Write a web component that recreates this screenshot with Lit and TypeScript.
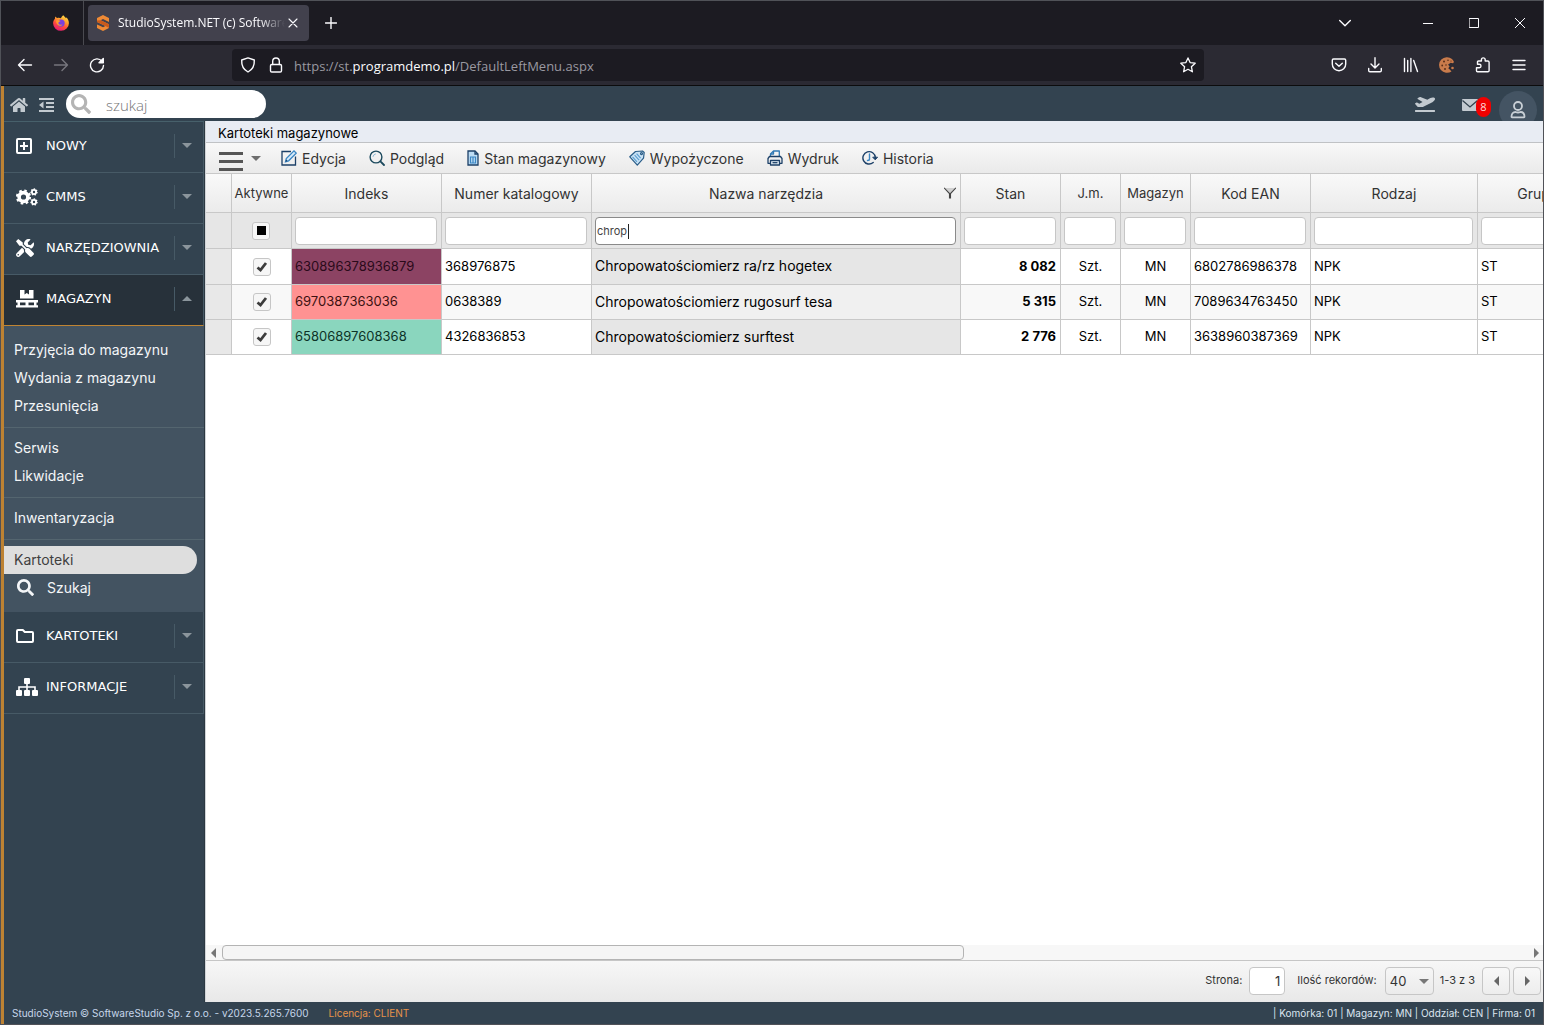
import { LitElement, html, css, svg, nothing } from "lit";
import { customElement, property } from "lit/decorators.js";
import { classMap } from "lit/directives/class-map.js";

/* ---------- icons ---------- */

const fa = (w: number, h: number, vw: number, vh: number, d: string) =>
  html`<svg width=${w} height=${h} viewBox="0 0 ${vw} ${vh}" fill="currentColor" aria-hidden="true"><path d=${d} /></svg>`;

const line = (s: number, body: unknown, w = 1.4, view = 16) =>
  html`<svg width=${s} height=${s} viewBox="0 0 ${view} ${view}" fill="none" stroke="currentColor"
    stroke-width=${w} stroke-linecap="round" stroke-linejoin="round" aria-hidden="true">${body}</svg>`;

const SEARCH =
  "M505 442.7L405.3 343c-4.5-4.5-10.6-7-17-7H372c27.6-35.3 44-79.7 44-128C416 93.1 322.9 0 208 0S0 93.1 0 208s93.1 208 208 208c48.3 0 92.7-16.4 128-44v16.3c0 6.4 2.5 12.5 7 17l99.7 99.7c9.4 9.4 24.6 9.4 33.9 0l28.3-28.3c9.4-9.4 9.4-24.6.1-34zM208 336c-70.7 0-128-57.2-128-128 0-70.7 57.2-128 128-128 70.7 0 128 57.2 128 128 0 70.7-57.2 128-128 128z";
const HOME =
  "M280.37 148.26L96 300.11V464a16 16 0 0 0 16 16l112.06-.29a16 16 0 0 0 15.92-16V368a16 16 0 0 1 16-16h64a16 16 0 0 1 16 16v95.64a16 16 0 0 0 16 16.05L464 480a16 16 0 0 0 16-16V300L295.67 148.26a12.19 12.19 0 0 0-15.3 0zM571.6 251.47L488 182.56V44.05a12 12 0 0 0-12-12h-56a12 12 0 0 0-12 12v72.61L318.47 43a48 48 0 0 0-61 0L4.34 251.47a12 12 0 0 0-1.6 16.9l25.5 31A12 12 0 0 0 45.15 301l235.22-193.74a12.19 12.19 0 0 1 15.3 0L530.9 301a12 12 0 0 0 16.9-1.6l25.5-31a12 12 0 0 0-1.7-16.93z";
const TOOLS =
  "M501.1 395.7L384 278.6c-23.1-23.1-57.6-27.6-85.4-13.9L192 158.1V96L64 0 0 64l96 128h62.1l106.6 106.6c-13.6 27.8-9.2 62.3 13.9 85.4l117.1 117.1c14.6 14.6 38.2 14.6 52.7 0l52.7-52.7c14.5-14.6 14.5-38.2 0-52.7zM331.7 225c28.3 0 54.9 11 74.9 31l19.4 19.4c15.8-6.9 30.8-16.5 43.8-29.5 37.1-37.1 49.7-89.3 37.9-136.7-2.2-9-13.5-12.1-20.1-5.5l-74.4 74.4-67.9-11.3L334 98.9l74.4-74.4c6.6-6.6 3.4-17.9-5.7-20.2-47.4-11.7-99.6.9-136.6 37.9-28.5 28.5-41.9 66.1-41.2 103.6l82.1 82.1c8.1-1.9 16.5-2.9 24.7-2.9zm-103.9 82l-56.7-56.7L18.7 402.8c-25 25-25 65.5 0 90.5s65.5 25 90.5 0l123.6-123.6c-7.6-19.9-9.9-41.6-5-62.7zM64 472c-13.2 0-24-10.8-24-24 0-13.3 10.7-24 24-24s24 10.7 24 24c0 13.2-10.7 24-24 24z";
const PLANE =
  "M624 448H16c-8.84 0-16 7.16-16 16v32c0 8.84 7.16 16 16 16h608c8.84 0 16-7.16 16-16v-32c0-8.84-7.16-16-16-16zM80.55 341.27c6.28 6.84 15.1 10.72 24.33 10.71l130.54-.18a65.62 65.62 0 0 0 29.64-7.12l290.96-147.65c26.74-13.57 50.71-32.94 67.02-58.31 18.31-28.48 20.3-49.09 13.07-63.65-7.21-14.57-24.74-25.27-58.25-27.45-29.85-1.94-59.54 5.92-86.28 19.48l-98.51 49.99-218.7-82.06a17.799 17.799 0 0 0-18-1.11L90.62 67.29c-10.67 5.41-13.25 19.65-5.17 28.53l156.22 98.1-103.21 52.38-72.35-36.47a17.804 17.804 0 0 0-16.07.02L9.91 230.22c-10.44 5.3-13.19 19.12-5.57 28.08l76.21 82.97z";

const firefoxIcon = html`<svg width="16" height="16" viewBox="0 0 16 16" aria-hidden="true">
  <defs>
    <linearGradient id="ff" x1="0.8" y1="0" x2="0.3" y2="1">
      <stop offset="0" stop-color="#ffe14a" /><stop offset="0.35" stop-color="#ffa02c" />
      <stop offset="0.65" stop-color="#ff4a3d" /><stop offset="1" stop-color="#e4187a" />
    </linearGradient>
  </defs>
  <path fill="url(#ff)" d="M10.4 0.2c.9 1.3 1.9 2 2.6 3 .3-.2.4-.5.3-.9 1.700 1.300 2.600 3.800 2.600 5.900A7.900 7.600 0 0 1 .1 8.300C.1 6.300.8 4.800 1.900 3.700c0-.9.2-1.600.5-2.200.5.8 1.200 1.200 2 1.500C6.100 2.600 7 3 8 3.200c.4-1.300 1.400-2.400 2.400-3z" />
  <circle cx="8" cy="8.100" r="3.700" fill="#7a3fe0" />
  <path fill="#ff9a2e" d="M3 5.600c1.500-1 3.100-.6 4.600.4-.9.800-2 .9-2.200 1.800-.1 2 2.400 2.500 4.100 1.500-1 2.600-6.300 2.300-6.500-3.700z" />
</svg>`;

const studioIcon = html`<svg width="14" height="16" viewBox="0 0 14 16" aria-hidden="true">
  <path fill="#ef8a35" d="M7 0l6 3v4L9.500 5.200 7 4 4.600 5.200 13 9.300V13l-6 3-6-3V9.400l3.500 1.700L7 12.200l2.400-1.100L1 7V3z" />
  <path fill="#c95a1c" d="M4.600 5.200L13 9.300V13l-3.600-1.900L1 7V5.500z" />
</svg>`;

const gear = (cx: number, cy: number, r: number, hole: number, teeth: number) => {
  const c = 2 * Math.PI * r;
  const seg = c / teeth / 2;
  return svg`<circle cx=${cx} cy=${cy} r=${(r + hole) / 2} fill="none" stroke="currentColor" stroke-width=${r - hole} />
    <circle cx=${cx} cy=${cy} r=${r} fill="none" stroke="currentColor" stroke-width=${r * 0.45} stroke-dasharray="${seg} ${seg}" />`;
};

const menuIcons: Record<string, unknown> = {
  plus: html`<svg width="16" height="16" viewBox="0 0 16 16" fill="none" stroke="currentColor" stroke-width="2" aria-hidden="true">
    <rect x="1" y="1" width="14" height="14" rx="1" /><path d="M8 4v8M4 8h8" /></svg>`,
  cogs: html`<svg width="22" height="18" viewBox="0 0 22 18" aria-hidden="true">
    ${gear(7.5, 9, 6.200, 2.6, 8)}${gear(18, 4, 3, 1.200, 7)}${gear(18, 14, 3, 1.200, 7)}</svg>`,
  tools: fa(18, 18, 512, 512, TOOLS),
  pallet: html`<svg width="22" height="18" viewBox="0 0 22 18" fill="currentColor" aria-hidden="true">
    <path d="M4 0h4.500v4.500L10.800 3l2.200 1.500V0H17.500v8.500H4z" />
    <path d="M0 10h22v2.400h-1.500v2.800H22v2.300H0v-2.300h1.500v-2.800H0zM4 12.400v2.800h5.500v-2.800zM12.500 12.400v2.800H18v-2.800z" fill-rule="evenodd" /></svg>`,
  folder: html`<svg width="18" height="14" viewBox="0 0 18 14" fill="none" stroke="currentColor" stroke-width="2" stroke-linejoin="round" aria-hidden="true">
    <path d="M1 2c0-.6.4-1 1-1h4.800l2 2H16c.6 0 1 .4 1 1v8c0 .6-.4 1-1 1H2c-.6 0-1-.4-1-1z" /></svg>`,
  sitemap: html`<svg width="22" height="18" viewBox="0 0 22 18" fill="currentColor" aria-hidden="true">
    <rect x="8" y="0" width="6" height="6" rx="1" /><rect x="0" y="12" width="6" height="6" rx="1" />
    <rect x="8" y="12" width="6" height="6" rx="1" /><rect x="16" y="12" width="6" height="6" rx="1" />
    <path d="M10.200 6h1.600v6h-1.600z" /><path d="M3 12V9h16v3" fill="none" stroke="currentColor" stroke-width="1.600" /></svg>`,
};

const toolIcons: Record<string, unknown> = {
  edit: html`<svg width="16" height="16" viewBox="0 0 16 16" fill="none" stroke="#1c4068" stroke-width="1.300" aria-hidden="true">
    <path d="M10 1.500H1v13.500h13.500V6.500" /><path d="M4.500 11.700l.8-3.200L13 .9l2.200 2.200-7.600 7.700z" fill="#d8ebfa" stroke="#3a86c4" />
    <path d="M4.500 11.700l.6-2.200 1.600 1.600z" fill="#1c4068" stroke="none" /></svg>`,
  view: html`<svg width="16" height="16" viewBox="0 0 16 16" fill="none" stroke="#1c4a5e" stroke-width="1.400" stroke-linecap="round" aria-hidden="true">
    <circle cx="7" cy="7" r="5.900" /><path d="M11.400 11.400l3.600 3.600" stroke-width="1.800" /><path d="M4 6.500a3.200 3.200 0 0 1 2.500-2.600" stroke="#8fbcd8" stroke-width="1" /></svg>`,
  stock: html`<svg width="12" height="16" viewBox="0 0 12 16" fill="none" stroke="#1c4068" stroke-width="1.300" aria-hidden="true">
    <path d="M1 1h7l3 3v11H1z" fill="#bcdcf4" /><path d="M8 1v3h3" /><path d="M3 7h6M3 13h6M3.500 6.500v7M6 6.500v7M8.500 6.500v7" stroke="#3a86c4" stroke-width="1.200" /></svg>`,
  tag: html`<svg width="16" height="16" viewBox="0 0 16 16" fill="none" stroke="#2a5d88" stroke-width="1.200" stroke-linejoin="round" aria-hidden="true">
    <path d="M.8 6.800L6.500 1.500 13.500 1l1.700 1.500-.7 5.700L8.300 15.200z" fill="#c9e2f5" /><path d="M3.500 6.800l4.500 5M5.600 5.200l4.500 5M7.600 3.600l4 4.500" stroke="#5d9fd0" stroke-width="1.200" />
    <circle cx="12.500" cy="3.600" r="1" fill="#fff" /></svg>`,
  print: html`<svg width="16" height="16" viewBox="0 0 16 16" fill="none" stroke="#1c4068" stroke-width="1.300" stroke-linejoin="round" aria-hidden="true">
    <path d="M3.500 6.500V4l3-3h5.800v5.500" stroke="#2f78b4" /><path d="M6.500 1v3h-3" stroke="#2f78b4" /><path d="M3 13.300H1V8.500l1.500-2h11L15 8.500v4.800h-2" /><path d="M3.500 10.500h9V15h-9z" fill="#eaf4fb" /><path d="M5.500 12.700h5" /></svg>`,
  history: html`<svg width="16" height="16" viewBox="0 0 16 16" fill="none" stroke="#1c4068" stroke-width="1.400" stroke-linecap="round" aria-hidden="true">
    <path d="M11.200 12.500A6.200 6.200 0 1 1 13.300 7.500" /><path d="M11 7.500l2.200 2.300L15.300 7.500z" fill="#1c4068" stroke-width="1" /><path d="M7.500 4v5c0 1-.8 1.500-2 1.500" stroke="#3a86c4" /></svg>`,
};

const tri = (dir: "up" | "down" | "left" | "right") => {
  const d = { up: "M0 5L5 0l5 5z", down: "M0 0h10L5 5z", left: "M5 0v10L0 5z", right: "M0 0v10l5-5z" }[dir];
  const v = dir === "up" || dir === "down";
  return html`<svg width=${v ? 10 : 5} height=${v ? 5 : 10} viewBox="0 0 ${v ? 10 : 5} ${v ? 5 : 10}" fill="currentColor" aria-hidden="true"><path d=${d} /></svg>`;
};

const reset = css`
  *, *::before, *::after { box-sizing: border-box; }
  button, input, select { font: inherit; color: inherit; margin: 0; }
  button { background: none; border: 0; padding: 0; display: flex; align-items: center; justify-content: center; }
  a { color: inherit; text-decoration: none; }
  svg { display: block; flex: none; }
  ul { list-style: none; margin: 0; padding: 0; }
`;

/* ---------- browser window chrome ---------- */

@customElement("browser-chrome")
export class BrowserChrome extends LitElement {
  static styles = [reset, css`
    :host { display: block; color: #fbfbfe; font-family: "Open Sans", "Noto Sans", sans-serif; }
    .tabs { display: flex; align-items: center; height: 44px; background: #1c1b22; }
    .pinned { width: 83px; height: 44px; padding: 0 14px; justify-content: flex-end; border-right: 1px solid #4a4a50; }
    .tab { display: flex; align-items: center; width: 221px; height: 36px; margin: 0 8px 0 4px; padding: 0 8px; border-radius: 4px; background: #42414d; }
    .tab-title { flex: 1; min-width: 0; margin-left: 8px; overflow: hidden; white-space: nowrap; font-size: 12px; line-height: 20px;
      mask-image: linear-gradient(90deg, #000 85%, transparent); }
    .tab-close { width: 16px; height: 16px; }
    .new-tab { width: 28px; height: 32px; }
    .window { display: flex; margin-left: auto; align-items: center; }
    .window button { width: 46px; height: 44px; }
    .window .all-tabs { margin-right: 37px; }
    .bar { display: flex; align-items: center; height: 41px; background: #2b2a33; border-bottom: 1px solid #0c0c0d; padding-left: 6px; }
    .nav { display: flex; width: 225px; }
    .nav button, .tools button { width: 36px; height: 36px; }
    .nav .off { color: #77767e; }
    .address { display: flex; align-items: center; flex: 0 1 972px; min-width: 0; height: 32px; padding: 0 8px; gap: 10px; border-radius: 4px; background: #1c1b22; }
    .marks { display: flex; gap: 12px; }
    .url { flex: 1; min-width: 0; padding-top: 2px; overflow: hidden; white-space: nowrap; font-size: 13px; line-height: 20px; color: #9a99a1; }
    .url b { font-weight: 400; color: #fbfbfe; }
    .tools { display: flex; margin-left: auto; padding-right: 6px; }
  `];

  render() {
    return html`
      <div class="tabs">
        <button class="pinned" aria-label="Firefox">${firefoxIcon}</button>
        <div class="tab">
          ${studioIcon}
          <span class="tab-title">StudioSystem.NET (c) SoftwareStudio</span>
          <button class="tab-close" aria-label="Zamknij kartę">${line(10, svg`<path d="M1 1l8 8M9 1l-8 8" />`, 1.1, 10)}</button>
        </div>
        <button class="new-tab" aria-label="Nowa karta">${line(12, svg`<path d="M6 0.500v11M.5 6h11" />`, 1.4, 12)}</button>
        <div class="window">
          <button class="all-tabs" aria-label="Lista kart">${line(12, svg`<path d="M.7 3.500L6 8.800l5.300-5.300" />`, 1.4, 12)}</button>
          <button aria-label="Minimalizuj">${line(10, svg`<path d="M0 5.500h10" />`, 1, 10)}</button>
          <button aria-label="Maksymalizuj">${line(10, svg`<path d="M.5.5h9v9h-9z" />`, 1, 10)}</button>
          <button aria-label="Zamknij">${line(10, svg`<path d="M0 0l10 10M10 0L0 10" />`, 1, 10)}</button>
        </div>
      </div>
      <div class="bar">
        <div class="nav">
          <button aria-label="Wstecz">${line(16, svg`<path d="M14.500 8H1.500M7 2.500L1.500 8 7 13.500" />`)}</button>
          <button class="off" aria-label="Dalej">${line(16, svg`<path d="M1.500 8h13M9 2.500L14.500 8 9 13.500" />`)}</button>
          <button aria-label="Odśwież">${line(16, svg`<path d="M13 4.200A6.500 6.500 0 1 0 14.500 8.500" /><path d="M14.300 1.500v4.300H10z" fill="currentColor" />`)}</button>
        </div>
        <div class="address">
          <span class="marks">
            ${line(16, svg`<path d="M8 .9L14.300 3c.3 5.200-1.500 9.500-6.300 12C3.200 12.500 1.400 8.200 1.700 3z" />`)}
            ${line(16, svg`<rect x="2.500" y="7.500" width="11" height="7.500" rx="1.300" /><path d="M4.700 7.500V4.300a3.300 3.300 0 0 1 6.600 0v3.200" />`)}
          </span>
          <div class="url">https://st.<b>programdemo.pl</b>/DefaultLeftMenu.aspx</div>
          <button aria-label="Dodaj zakładkę">${line(16, svg`<path d="M8 .9l2.100 4.700 5.100.6-3.800 3.500 1 5.100L8 12.300l-4.400 2.500 1-5.100L.8 6.200l5.100-.6z" />`, 1.3)}</button>
        </div>
        <div class="tools">
          <button aria-label="Pocket">${line(16, svg`<path d="M2.500 2h11c.8 0 1.200.5 1.200 1.200V7c0 4-3 6.700-6.700 6.700S1.300 11 1.300 7V3.200C1.300 2.500 1.700 2 2.500 2z" /><path d="M4.700 6.200L8 9.300l3.300-3.100" />`)}</button>
          <button aria-label="Pobrane">${line(16, svg`<path d="M8 .7v10M4 7l4 4 4-4M1.700 11.500v2c0 .8.5 1.300 1.300 1.300h10c.8 0 1.300-.5 1.300-1.300v-2" />`)}</button>
          <button aria-label="Biblioteka">${line(16, svg`<path d="M1.500 1.500v13M4.700 3.500v11M7.900 1.500v13M10.700 3.500l3.800 11" />`)}</button>
          <button aria-label="Ciasteczka">
            <svg width="16" height="16" viewBox="0 0 16 16" aria-hidden="true">
              <path fill="#c97b4b" d="M13 1.900A8 7.800 0 1 0 12.500 14.500L11 12.700l-1.700-1.500 1.300-2L9 7.800l2.600-2 2.400.4 1-1.200a8 8 0 0 0-2-3.100z" />
              <g fill="#5a2f1a"><circle cx="5" cy="4.500" r="1" /><circle cx="9" cy="3.200" r=".8" /><circle cx="3.200" cy="8.500" r=".9" /><circle cx="7" cy="8" r=".8" /><circle cx="6" cy="12" r="1" /><circle cx="12" cy="4" r=".6" /></g>
              <circle cx="13.500" cy="11" r="1.300" fill="#c97b4b" />
            </svg>
          </button>
          <button aria-label="Rozszerzenia">${line(16, svg`<path d="M2.500 14.800h10.300c.8 0 1.300-.5 1.300-1.300V5.300c0-.8-.5-1.300-1.300-1.300h-2.600V2.800a1.900 1.900 0 0 0-3.800 0V4H3.500c-.7 0-1 .4-1 1v2.300h1.800a1.700 1.700 0 0 1 0 3.400H1.500v3c0 .7.400 1.100 1 1.100z" />`)}</button>
          <button aria-label="Menu">${line(16, svg`<path d="M2 3.500h12M2 8h12M2 12.500h12" />`)}</button>
        </div>
      </div>`;
  }
}

/* ---------- application top bar ---------- */

@customElement("app-topbar")
export class AppTopbar extends LitElement {
  static styles = [reset, css`
    :host { display: block; background: #334350; color: #c3cad0; font-family: "Open Sans", "Noto Sans", sans-serif; }
    .bar { display: flex; align-items: center; height: 35px; padding: 0 6px 0 5px; overflow: hidden; }
    .home { width: 20px; height: 28px; padding-top: 2px; }
    .outdent { width: 16px; height: 28px; margin: 0 12px 0 9px; padding-top: 2px; }
    .search { display: flex; align-items: center; width: 200px; height: 28px; padding-left: 5px; gap: 15px; border-radius: 14px; background: #fff; color: #b4b4b4; }
    .search input { flex: 1; min-width: 0; border: 0; outline: 0; padding: 2px 0 0; background: none; font-size: 15px; font-weight: 300; color: #555; }
    .search input::placeholder { color: #757575; opacity: 1; }
    .right { display: flex; align-items: center; margin-left: auto; }
    .mail { display: flex; align-items: center; margin: 2px 8px 0 27px; }
    .badge { display: flex; align-items: center; justify-content: center; width: 15px; height: 20px; margin: 5px 0 0 -2px; border-radius: 8px; background: #f10000; color: #ffd9d9; font-size: 11px; line-height: 20px; }
    .user { width: 38px; height: 38px; margin-top: 12px; border-radius: 50%; background: #445463; }
  `];

  render() {
    return html`<div class="bar">
      <button class="home" aria-label="Start">${fa(18, 16, 576, 512, HOME)}</button>
      <button class="outdent" aria-label="Zwiń menu">
        <svg width="15" height="14" viewBox="0 0 15 14" fill="currentColor" aria-hidden="true"><path d="M0 0h15v2H0zM7 4h8v2H7zM7 8h8v2H7zM0 12h15v2H0zM0 7l4.500-3.500v7z" /></svg>
      </button>
      <label class="search">${fa(20, 20, 512, 512, SEARCH)}<input type="text" placeholder="szukaj" aria-label="szukaj" /></label>
      <div class="right">
        <button aria-label="Wyloguj">${fa(20, 16, 640, 512, PLANE)}</button>
        <button class="mail" aria-label="Wiadomości">
          <svg width="16" height="12" viewBox="0 0 16 12" aria-hidden="true"><rect width="16" height="12" rx="1" fill="currentColor" /><path d="M.5 1.500L8 8l7.500-6.500" fill="none" stroke="#34434f" stroke-width="1.300" /></svg>
          <span class="badge">8</span>
        </button>
        <button class="user" aria-label="Użytkownik">
          <svg width="16" height="18" viewBox="0 0 16 18" fill="none" stroke="#c9d0d6" stroke-width="1.800" aria-hidden="true"><circle cx="8" cy="5" r="4" /><path d="M1.500 15.800c0-3 1.500-4.800 4-4.800 1.800.7 3.200.7 5 0 2.500 0 4 1.800 4 4.800 0 .3-.2.500-.5.500H2c-.3 0-.5-.2-.5-.5z" stroke-linejoin="round" /></svg>
        </button>
      </div>
    </div>`;
  }
}

/* ---------- side menu ---------- */

interface MenuEntry { icon: string; label: string; open?: boolean; }

@customElement("side-menu")
export class SideMenu extends LitElement {
  static styles = [reset, css`
    :host { display: block; flex: none; width: 201px; background: #334350; border-right: 1px solid #2c3841; color: #fff; font-family: "DejaVu Sans", sans-serif; }
    .list { border-top: 1px solid #47606b; }
    .item { width: 100%; height: 51px; padding: 0 11px 3px 12px; border-bottom: 1px solid #475a66; border-right: 1px solid #475a66; font-size: 13px; }
    .icon { display: flex; width: 30px; }
    .label { flex: 1; text-align: left; }
    .arrow { display: flex; align-items: center; height: 24px; padding-left: 7px; border-left: 1px solid #475a66; color: #8b959c; }
    .item.open { background: #27313a; border-bottom-color: #c08432; }
    .sub { background: #435361; padding: 10px 0 10px; font-family: Inter, sans-serif; font-size: 14px; }
    .sub a { display: flex; align-items: center; height: 28px; padding: 0 10px 2px; color: #f4f6f8; }
    .sub li.split { border-bottom: 1px solid #54656f; padding-bottom: 7px; margin-bottom: 6px; }
    .sub a.active { width: 193px; border-radius: 0 14px 14px 0; background: #dedede; color: #404040; }
    .sub .find { gap: 13px; padding-left: 13px; }
  `];

  private item(m: MenuEntry) {
    return html`<button class=${classMap({ item: true, open: !!m.open })} aria-expanded=${m.open ? "true" : "false"}>
      <span class="icon">${menuIcons[m.icon]}</span>
      <span class="label">${m.label}</span>
      <span class="arrow">${tri(m.open ? "up" : "down")}</span>
    </button>`;
  }

  render() {
    const top: MenuEntry[] = [
      { icon: "plus", label: "NOWY" },
      { icon: "cogs", label: "CMMS" },
      { icon: "tools", label: "NARZĘDZIOWNIA" },
      { icon: "pallet", label: "MAGAZYN", open: true },
    ];
    const bottom: MenuEntry[] = [
      { icon: "folder", label: "KARTOTEKI" },
      { icon: "sitemap", label: "INFORMACJE" },
    ];
    const sub = ["Przyjęcia do magazynu", "Wydania z magazynu", "Przesunięcia", "Serwis", "Likwidacje", "Inwentaryzacja"];
    const splits = new Set([2, 4, 5]);
    return html`<nav class="list">
      ${top.map((m) => this.item(m))}
      <ul class="sub">
        ${sub.map((s, i) => html`<li class=${splits.has(i) ? "split" : nothing}><a href="#">${s}</a></li>`)}
        <li><a class="active" href="#">Kartoteki</a></li>
        <li><a class="find" href="#">${fa(17, 17, 512, 512, SEARCH)}<span>Szukaj</span></a></li>
      </ul>
      ${bottom.map((m) => this.item(m))}
    </nav>`;
  }
}

/* ---------- stock grid ---------- */

interface Column { key: string; title: string; width: number; align?: "center" | "right"; filter?: string; }
type Row = Record<string, string>;

const columns: Column[] = [
  { key: "indeks", title: "Indeks", width: 150 },
  { key: "numer", title: "Numer katalogowy", width: 150 },
  { key: "nazwa", title: "Nazwa narzędzia", width: 369, filter: "chrop" },
  { key: "stan", title: "Stan", width: 100, align: "right" },
  { key: "jm", title: "J.m.", width: 60, align: "center" },
  { key: "magazyn", title: "Magazyn", width: 70, align: "center" },
  { key: "ean", title: "Kod EAN", width: 120 },
  { key: "rodzaj", title: "Rodzaj", width: 167 },
  { key: "grupa", title: "Grupa", width: 120 },
];

const rows: Row[] = [
  { indeks: "630896378936879", numer: "368976875", nazwa: "Chropowatościomierz ra/rz hogetex", stan: "8 082", jm: "Szt.", magazyn: "MN", ean: "6802786986378", rodzaj: "NPK", grupa: "ST", tone: "plum" },
  { indeks: "6970387363036", numer: "0638389", nazwa: "Chropowatościomierz rugosurf tesa", stan: "5 315", jm: "Szt.", magazyn: "MN", ean: "7089634763450", rodzaj: "NPK", grupa: "ST", tone: "coral" },
  { indeks: "65806897608368", numer: "4326836853", nazwa: "Chropowatościomierz surftest", stan: "2 776", jm: "Szt.", magazyn: "MN", ean: "3638960387369", rodzaj: "NPK", grupa: "ST", tone: "mint" },
];

@customElement("stock-grid")
export class StockGrid extends LitElement {
  @property({ attribute: false }) rows: Row[] = rows;

  static styles = [reset, css`
    :host { display: flex; flex-direction: column; flex: 1; min-width: 0; background: #fff; color: #000; border-left: 1px solid #d0d4d8; font-family: Inter, sans-serif; font-size: 13px; }
    .title { margin: 0; height: 22px; padding: 2px 12px 0; background: #e8ecf3; border-bottom: 1px solid #c0c2c5; font-size: 13px; font-weight: 400; line-height: 20px; }
    .toolbar { display: flex; align-items: center; height: 30px; padding-left: 13px; background: linear-gradient(#f8f8f8, #eaeaea); color: #333; }
    .burger { gap: 8px; margin-right: 20px; color: #6e6e6e; }
    .bars { display: flex; flex-direction: column; gap: 5px; width: 24px; padding-top: 7px; }
    .bars i { height: 3px; background: #555; }
    .tool { gap: 5px; margin-right: 23px; white-space: nowrap; font-size: 14px; }
    .scroller { flex: 1; overflow: hidden; }
    table { border-collapse: separate; border-spacing: 0; table-layout: fixed; width: 1332px; border-top: 1px solid #c8c8c8; }
    th, td { padding: 0 3px; border-right: 1px solid #c8c8c8; border-bottom: 1px solid #c8c8c8; white-space: nowrap; text-align: left; overflow: hidden; }
    .heads th { height: 39px; padding: 0; text-align: center; font-size: 13px; font-weight: 400; color: #333; background: linear-gradient(#f9f9f9, #ebebeb); }
    .heads th.wide { font-size: 14px; }
    .head { display: flex; align-items: center; justify-content: center; }
    .head.filtered { padding: 0 4px; }
    .head.filtered span { flex: 1; padding-right: 8px; }
    .filters th { height: 36px; padding-right: 4px; background: #e6e6e6; }
    .field { position: relative; }
    .caret { position: absolute; left: 33px; top: 7px; width: 1px; height: 15px; background: #222; }
    .filters input[type="text"] { display: block; width: 100%; height: 28px; padding: 0 1px; border: 1px solid #c6c6c6; border-radius: 4px; background: #fff; font-size: 11px; font-weight: 400; color: #444; outline: 0; }
    .filters input.used { border-color: #8a8a8a; }
    .rows td { height: 35px; padding-bottom: 2px; }
    .rows tr:first-child td { height: 36px; }
    .rows tr:nth-child(even) td { background: #f8f8f8; }
    .rows .handle, .rows tr:nth-child(even) .handle { background: #e8e8e8; }
    .rows .mark { padding-bottom: 0; }
    .rows .nazwa { background: #e6e6e6; font-size: 14px; }
    .rows tr:nth-child(even) .nazwa { background: #f0f0f0; }
    .rows .stan { font-weight: 700; }
    .center { text-align: center; }
    .right { text-align: right; padding-right: 4px; }
    .rows tr .plum { background: #8c4363; color: #2a0a1a; }
    .rows tr:nth-child(even) .coral { background: #ff9292; color: #3d1111; }
    .rows tr .mint { background: #8ad6be; color: #0c3327; }
    .check { display: grid; width: 18px; height: 18px; margin: 0 auto; color: #3c3c3c; }
    .check input, .check svg { grid-area: 1 / 1; }
    .check svg { place-self: center; pointer-events: none; }
    .check input { appearance: none; width: 18px; height: 18px; border: 1px solid #c6c6c6; border-radius: 3px; background: #f6f6f6; }
    .hscroll { display: flex; align-items: center; height: 15px; padding: 0 4px 0 5px; gap: 6px; background: #f7f7f7; color: #777; }
    .track { flex: 1; height: 15px; }
    .thumb { width: 56.8%; height: 15px; border: 1px solid #b4b4b4; border-radius: 4px; background: #f5f5f5; }
    .pager { display: flex; align-items: center; justify-content: flex-end; height: 42px; padding: 0 2px 1px 0; border-top: 1px solid #c6c6c6; background: linear-gradient(#f7f7f7, #e8e8e8); font-size: 11px; color: #333; }
    .pager label, .pager .count { padding-bottom: 2px; }
    .pager input { width: 36px; height: 28px; margin: 0 12px 0 7px; padding: 0 4px; border: 1px solid #c6c6c6; border-radius: 4px; background: #fff; text-align: right; font-size: 13px; outline: 0; }
    .pick { display: grid; align-items: center; margin: 0 6px 0 8px; color: #777; }
    .pick select, .pick svg { grid-area: 1 / 1; }
    .pick svg { justify-self: end; margin-right: 5px; pointer-events: none; }
    .pick select { appearance: none; width: 49px; height: 28px; padding: 0 4px; border: 1px solid #c6c6c6; border-radius: 4px; background: linear-gradient(#f6f6f6, #ebebeb); font-size: 13px; color: #333; }
    .page { width: 28px; height: 28px; border: 1px solid #c6c6c6; border-radius: 4px; background: linear-gradient(#f8f8f8, #ededed); color: #666; }
    .page.prev { margin: 0 3px 0 7px; }
  `];

  private tools = [
    ["edit", "Edycja"], ["view", "Podgląd"], ["stock", "Stan magazynowy"],
    ["tag", "Wypożyczone"], ["print", "Wydruk"], ["history", "Historia"],
  ];

  render() {
    return html`
      <h1 class="title">Kartoteki magazynowe</h1>
      <div class="toolbar">
        <button class="burger" aria-label="Menu"><span class="bars"><i></i><i></i><i></i></span>${tri("down")}</button>
        ${this.tools.map(([k, t]) => html`<button class="tool">${toolIcons[k]}<span>${t}</span></button>`)}
      </div>
      <div class="scroller">
        <table>
          <colgroup>
            <col style="width:26px" /><col style="width:60px" />
            ${columns.map((c) => html`<col style="width:${c.width}px" />`)}
          </colgroup>
          <thead>
            <tr class="heads">
              <th></th>
              <th scope="col">Aktywne</th>
              ${columns.map((c) => html`<th scope="col" class=${c.width >= 100 ? "wide" : nothing}><div class=${classMap({ head: true, filtered: !!c.filter })}><span>${c.title}</span>${c.filter
                ? html`<svg width="12" height="12" viewBox="0 0 12 12" aria-hidden="true"><path d="M0 1h12L7 6.500V11H5V6.500z" fill="#d0d0d0" /><path d="M0 .8L5.500 6.500V11.500M12 .8L6.500 6.500V11.500" fill="none" stroke="#444" stroke-width="1.100" /></svg>`
                : nothing}</div></th>`)}
            </tr>
            <tr class="filters">
              <th></th>
              <th><label class="check"><input type="checkbox" aria-label="Filtr: Aktywne" /><svg width="9" height="9" viewBox="0 0 9 9" aria-hidden="true"><rect width="9" height="9" fill="#000" /></svg></label></th>
              ${columns.map((c) => html`<th><div class="field"><input type="text" class=${c.filter ? "used" : nothing} aria-label="Filtr: ${c.title}" .value=${c.filter ?? ""} />${c.filter ? html`<i class="caret"></i>` : nothing}</div></th>`)}
            </tr>
          </thead>
          <tbody class="rows">
            ${this.rows.map((r) => html`<tr>
              <td class="handle"></td>
              <td class="mark"><label class="check"><input type="checkbox" checked aria-label="Aktywne: ${r.indeks}" /><svg width="12" height="10" viewBox="0 0 12 10" aria-hidden="true"><path d="M1.500 5.500L4.500 8l5.500-7" fill="none" stroke="currentColor" stroke-width="2.800" /></svg></label></td>
              ${columns.map((c) => html`<td class="${c.key} ${c.align ?? ""} ${c.key === "indeks" ? r.tone : ""}">${r[c.key]}</td>`)}
            </tr>`)}
          </tbody>
        </table>
      </div>
      <div class="hscroll">${tri("left")}<div class="track"><div class="thumb"></div></div>${tri("right")}</div>
      <div class="pager">
        <label for="page">Strona:</label><input id="page" type="text" .value=${"1"} />
        <label for="size">Ilość rekordów:</label>
        <span class="pick"><select id="size"><option>40</option></select>${tri("down")}</span>
        <span class="count">1-3 z 3</span>
        <button class="page prev" aria-label="Poprzednia strona">${tri("left")}</button>
        <button class="page" aria-label="Następna strona">${tri("right")}</button>
      </div>`;
  }
}

/* ---------- page ---------- */

@customElement("app-root")
export class AppRoot extends LitElement {
  static styles = [reset, css`
    :host { display: flex; flex-direction: column; box-sizing: border-box; min-height: 100vh; border: 1px solid #505258; overflow: hidden; font-family: Inter, sans-serif; }
    .app { flex: 1; display: flex; flex-direction: column; border-left: 3px solid #bd8233; background: #334350; }
    .main { flex: 1; display: flex; min-width: 0; }
    .status { display: flex; align-items: center; height: 22px; padding: 0 8px; gap: 20px; font-size: 10px; color: #c6d6ea; }
    .licence { color: #e8934a; }
    .where { margin-left: auto; color: #dde6f0; }
  `];

  render() {
    return html`
      <browser-chrome></browser-chrome>
      <div class="app">
        <app-topbar></app-topbar>
        <div class="main"><side-menu></side-menu><stock-grid></stock-grid></div>
        <footer class="status">
          <span>StudioSystem © SoftwareStudio Sp. z o.o. - v2023.5.265.7600</span>
          <span class="licence">Licencja: CLIENT</span>
          <span class="where">| Komórka: 01 | Magazyn: MN | Oddział: CEN | Firma: 01</span>
        </footer>
      </div>`;
  }
}
